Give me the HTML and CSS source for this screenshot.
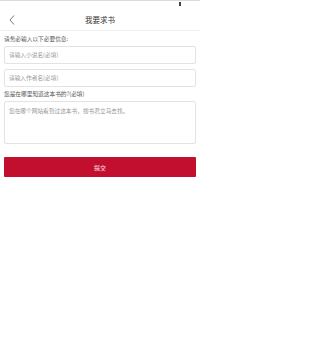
FILE: index.html
```html
<!DOCTYPE html>
<html lang="zh-CN">
<head>
<meta charset="utf-8">
<title>我要求书</title>
<link rel="stylesheet" href="styles.css">
</head>
<body>
<div class="page">
  <div class="status">
    <span class="status-icon"></span>
  </div>
  <header class="topbar">
    <span class="back">
      <svg width="6" height="10" viewBox="0 0 6 10"><path d="M5 0.5 L1 5 L5 9.5" fill="none" stroke="#555" stroke-width="0.8"/></svg>
    </span>
    <h1 class="title">我要求书</h1>
  </header>
  <main class="form">
    <div class="label first">请务必输入以下必要信息:</div>
    <div class="field">请输入小说名(必填)</div>
    <div class="field second">请输入作者名(必填)</div>
    <div class="label">您是在哪里知道这本书的?(必填)</div>
    <div class="area">您在哪个网站看到过这本书，搜书君立马去找。</div>
    <button class="submit">提交</button>
  </main>
</div>
</body>
</html>
```
FILE: styles.css
```css
* { box-sizing: border-box; }
html, body { margin: 0; padding: 0; background: #fff; }
body {
  font-family: "Noto Sans CJK SC", "Noto Sans", sans-serif;
  color: #333;
}
.page {
  max-width: 200px;
}
.status {
  height: 9px;
  border-top: 1px solid #dcdcdc;
  display: flex;
  justify-content: flex-end;
  padding-right: 19px;
}
.status-icon {
  width: 2px;
  height: 4px;
  margin-top: 1px;
  background: #444;
}
.topbar {
  position: relative;
  height: 22px;
  border-bottom: 1px solid #eeeeee;
  display: flex;
  align-items: center;
  justify-content: center;
}
.back {
  position: absolute;
  left: 9px;
  top: 6px;
  display: flex;
}
.title {
  margin: 0;
  font-size: 7.5px;
  font-weight: normal;
  color: #333;
  line-height: 10px;
}
.form {
  display: flex;
  flex-direction: column;
  padding: 0 4px;
}
.label {
  font-size: 5.7px;
  line-height: 8px;
  color: #555;
  margin-top: 2.5px;
  height: 8px;
}
.label.first { margin-top: 4px; }
.field {
  margin-top: 3px;
  height: 18px;
  border: 1px solid #e3e3e3;
  border-radius: 2px;
  font-size: 5.7px;
  line-height: 16px;
  color: #999;
  padding-left: 4px;
}
.field.second { margin-top: 5px; }
.area {
  margin-top: 3.5px;
  height: 43px;
  border: 1px solid #e3e3e3;
  border-radius: 2px;
  font-size: 5.7px;
  line-height: 8px;
  color: #999;
  padding: 5px 4px;
}
.submit {
  margin-top: 13px;
  height: 20px;
  border: none;
  border-radius: 1px;
  background: #c20f2f;
  color: #fbe3e7;
  font-family: inherit;
  font-size: 6px;
  padding: 0;
}
```
